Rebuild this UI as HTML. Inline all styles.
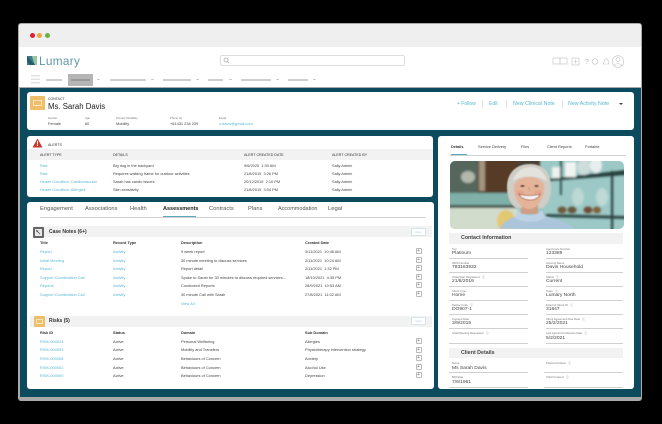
<!DOCTYPE html>
<html><head><meta charset="utf-8"><title>Lumary</title>
<style>
html,body{margin:0;padding:0;background:#000}
body{width:662px;height:424px;position:relative;overflow:hidden;font-family:"Liberation Sans",sans-serif;color:#444;filter:blur(.3px)}
.a{position:absolute}
.t{position:absolute;white-space:nowrap;line-height:6px;height:6px;font-size:3.9px;color:#444}
.l{color:#58b7d2}
.h{font-weight:bold;color:#333}
.lb{font-size:2.8px;color:#777}
.v{font-size:4.9px;color:#444}
.b{position:absolute;width:6px;height:6px;border:.5px solid #bbb;box-sizing:border-box;border-radius:1px;background:#fff;color:#777;font-size:5px;line-height:5px;text-align:center}
.d{position:absolute;height:2px;background:#cfcfcf}
.c{position:absolute;width:3px;height:1px;background:#ccc}
.card{position:absolute;background:#fff;border-radius:3px}
.band{position:absolute;background:#f2f2f2}
.ln{position:absolute;height:.6px;background:#d0d0d0}
.tab{position:absolute;white-space:nowrap;line-height:8px;font-size:5.800px;color:#555}
.nb{position:absolute;width:15px;height:8px;border:.6px solid #d5e5ea;box-sizing:border-box;background:#fff;border-radius:1px;color:#a9cfdb;font-size:3px;line-height:7px;text-align:center}
</style></head><body>
<div class="a" style="left:18px;top:23px;width:624px;height:378px;background:#a9a9a9;border-radius:3px"></div>
<div class="a" style="left:19px;top:24px;width:622px;height:23px;background:#efefef;border-radius:2px 2px 0 0"></div>
<div class="a" style="left:19px;top:47px;width:622px;height:40px;background:#fff"></div>
<div class="a" style="left:29.5px;top:33px;width:5px;height:5px;border-radius:50%;background:#e0202f"></div>
<div class="a" style="left:37px;top:33px;width:5px;height:5px;border-radius:50%;background:#f2a33c"></div>
<div class="a" style="left:45px;top:33px;width:5px;height:5px;border-radius:50%;background:#6db33f"></div>

<svg class="a" style="left:27px;top:56px" width="10" height="9" viewBox="0 0 10 9"><path d="M0 0L5 0 8 9 0 9Z" fill="#3f7d8c"/><path d="M5 0L10 0 10 9 8 9Z" fill="#9cc5a0"/><path d="M0 0L8 9 3 9 0 5Z" fill="#245a6b"/></svg>
<div class="t" style="left:39px;top:54px;height:14px;line-height:14px;font-size:11.800px;letter-spacing:.3px;color:#5f98a6">Lumary</div>

<div class="a" style="left:220px;top:55px;width:185px;height:11px;border:.7px solid #ddd;box-sizing:border-box;border-radius:2px;background:#fff"></div>
<svg class="a" style="left:223px;top:57px" width="7" height="7" viewBox="0 0 7 7"><circle cx="3" cy="3" r="2" fill="none" stroke="#aaa" stroke-width=".8"/><path d="M4.5 4.5L6 6" stroke="#aaa" stroke-width=".8"/></svg>

<svg class="a" style="left:552px;top:54px" width="72" height="14" viewBox="0 0 72 14">
<g fill="none" stroke="#c2c2c2" stroke-width=".6"><rect x="1" y="4" width="7" height="6"/><rect x="8" y="4" width="7" height="6"/><rect x="20" y="4" width="7" height="7"/><path d="M23.5 5.5v4M21.5 7.5h4"/><circle cx="43" cy="7.5" r="2.8"/><path d="M51 10c1-1 1-4 2.5-5s3 1 3.500 5z"/><circle cx="66" cy="7.500" r="5.800"/><circle cx="66" cy="5.500" r="2"/><path d="M62 12c1-3 7-3 8 0"/></g>
<text x="33" y="10" font-size="7" fill="#bbb" font-family="Liberation Sans">?</text></svg>

<div class="a" style="left:31px;top:75px;width:9px;height:9px;background:repeating-linear-gradient(180deg,#e2e2e2 0 1.500px,transparent 1.500px 3.500px)"></div>
<div class="d" style="left:46px;top:79px;width:16px"></div>
<div class="a" style="left:68px;top:74px;width:24.500px;height:12px;background:#b5b5b5"></div>
<div class="a" style="left:71px;top:79px;width:19px;height:2px;background:#999"></div>
<div class="c" style="left:97px;top:79px"></div>
<div class="d" style="left:110px;top:79px;width:36px"></div><div class="c" style="left:151px;top:79px"></div>
<div class="d" style="left:163px;top:79px;width:28px"></div><div class="c" style="left:196px;top:79px"></div>
<div class="d" style="left:208px;top:79px;width:15px"></div><div class="c" style="left:229px;top:79px"></div>
<div class="d" style="left:241px;top:79px;width:30px"></div><div class="c" style="left:276px;top:79px"></div>
<div class="d" style="left:288px;top:79px;width:20px"></div><div class="c" style="left:313px;top:79px"></div>

<div class="a" style="left:20px;top:88px;width:621px;height:309px;background:#0c4b5d"></div>

<!-- contact -->
<div class="card" style="left:27px;top:92px;width:607px;height:38px"></div>
<div class="a" style="left:30px;top:96px;width:15px;height:14px;background:#f0bd68;border-radius:1px"></div>
<div class="a" style="left:33px;top:100px;width:9px;height:6px;border:.6px solid #fbe6bd;box-sizing:border-box"></div>
<div class="t" style="left:48px;top:96px;font-size:3.500px;color:#333">CONTACT</div>
<div class="t" style="left:48px;top:102px;height:10px;line-height:10px;font-size:7.800px;color:#1c1c1c">Ms. Sarah Davis</div>
<div class="t lb" style="left:48px;top:115px">Gender</div><div class="t" style="left:48px;top:121px">Female</div>
<div class="t lb" style="left:85px;top:115px">Age</div><div class="t" style="left:85px;top:121px">60</div>
<div class="t lb" style="left:116px;top:115px">Primary Disability</div><div class="t" style="left:116px;top:121px">Mobility</div>
<div class="t lb" style="left:170px;top:115px">Phone (2)</div><div class="t" style="left:170px;top:121px">+61431 234 239</div>
<div class="t lb" style="left:219px;top:115px">Email</div><div class="t l" style="left:219px;top:121px">s.davis@gmail.com</div>
<div class="t l" style="left:457px;top:101px;font-size:5px">+ Follow</div>
<div class="t l" style="left:489px;top:101px;font-size:5px">Edit</div>
<div class="t l" style="left:513px;top:101px;font-size:5.300px">New Clinical Note</div>
<div class="t l" style="left:568px;top:101px;font-size:5.300px">New Activity Note</div>
<div class="a" style="left:482px;top:100px;width:.6px;height:8px;background:#e4e4e4"></div>
<div class="a" style="left:506px;top:100px;width:.6px;height:8px;background:#e4e4e4"></div>
<div class="a" style="left:562px;top:100px;width:.6px;height:8px;background:#e4e4e4"></div>
<div class="a" style="left:618.500px;top:103px;width:0;height:0;border:2px solid transparent;border-top:2.500px solid #444;border-bottom:0"></div>

<!-- alerts -->
<div class="card" style="left:27px;top:136px;width:406px;height:61px"></div>
<svg class="a" style="left:32px;top:138px" width="11" height="10" viewBox="0 0 11 10"><path d="M5.500 .5L10.500 9.500H.5Z" fill="#c4392f"/><rect x="5" y="3" width="1" height="3.500" fill="#fff"/><rect x="5" y="7" width="1" height="1" fill="#fff"/></svg>
<div class="t" style="left:48px;top:142px;font-size:3.600px;color:#333">ALERTS</div>
<div class="band" style="left:27px;top:149px;width:406px;height:11px"></div>
<div class="t" style="left:40px;top:152px;font-size:3.600px;color:#333">ALERT TYPE</div>
<div class="t" style="left:113px;top:152px;font-size:3.600px;color:#333">DETAILS</div>
<div class="t" style="left:244px;top:152px;font-size:3.600px;color:#333">ALERT CREATED DATE</div>
<div class="t" style="left:332px;top:152px;font-size:3.600px;color:#333">ALERT CREATED BY</div>
<div class="t l" style="left:40px;top:162.500px">Risk</div><div class="t" style="left:113px;top:162.500px">Big dog in the backyard</div><div class="t" style="left:244px;top:162.500px">9/6/2020 &nbsp;1:30 AM</div><div class="t" style="left:332px;top:162.500px">Sally Admin</div>
<div class="t l" style="left:40px;top:170.500px">Risk</div><div class="t" style="left:113px;top:170.500px">Requires walking frame for outdoor activities</div><div class="t" style="left:244px;top:170.500px">21/8/2019 &nbsp;3:26 PM</div><div class="t" style="left:332px;top:170.500px">Sally Admin</div>
<div class="t l" style="left:40px;top:178.500px">Health Condition: Cardiovascular</div><div class="t" style="left:113px;top:178.500px">Sarah has cardio issues</div><div class="t" style="left:244px;top:178.500px">20/12/2019 &nbsp;2:10 PM</div><div class="t" style="left:332px;top:178.500px">Sally Admin</div>
<div class="t l" style="left:40px;top:186.500px">Health Condition: Allergies</div><div class="t" style="left:113px;top:186.500px">Skin sensitivity</div><div class="t" style="left:244px;top:186.500px">21/8/2019 &nbsp;3:04 PM</div><div class="t" style="left:332px;top:186.500px">Sally Admin</div>

<!-- main -->
<div class="card" style="left:27px;top:202px;width:407px;height:187px"></div>
<div class="tab" style="left:40px;top:205px">Engagement</div>
<div class="tab" style="left:85px;top:205px">Associations</div>
<div class="tab" style="left:130px;top:205px">Health</div>
<div class="tab" style="left:163px;top:205px;color:#222;font-weight:bold;font-size:5.500px">Assessments</div>
<div class="tab" style="left:209px;top:205px">Contracts</div>
<div class="tab" style="left:248px;top:205px">Plans</div>
<div class="tab" style="left:278px;top:205px;font-size:5.500px">Accommodation</div>
<div class="tab" style="left:328px;top:205px">Legal</div>
<div class="ln" style="left:40px;top:216.500px;width:386px"></div>
<div class="a" style="left:163px;top:215.500px;width:33px;height:1.200px;background:#5aa9bd"></div>

<div class="band" style="left:33px;top:226px;width:399px;height:11px"></div>
<div class="a" style="left:33px;top:227px;width:10.500px;height:10.500px;background:#666;border-radius:1px"></div>
<div class="a" style="left:34.500px;top:228.500px;width:7.500px;height:7.500px;background:#e9e9e9"></div>
<svg class="a" style="left:35px;top:229px" width="6" height="6" viewBox="0 0 6 6"><path d="M1 1L5 5M3 1.500L1.500 3" stroke="#555" stroke-width=".8" fill="none"/></svg>
<div class="t" style="left:49px;top:228.500px;font-size:5px;color:#333;font-weight:bold">Case Notes (6+)</div>
<div class="nb" style="left:411px;top:228px">New</div>

<div class="t h" style="left:40px;top:240px">Title</div><div class="t h" style="left:113px;top:240px">Record Type</div><div class="t h" style="left:181px;top:240px">Description</div><div class="t h" style="left:305px;top:240px">Created Date</div>

<div class="t l" style="left:40px;top:249px">Report</div><div class="t l" style="left:113px;top:249px">Activity</div><div class="t" style="left:181px;top:249px">9 week report</div><div class="t" style="left:305px;top:249px">3/11/2021 &nbsp;10:48 AM</div><div class="b" style="left:415.500px;top:248px">+</div>
<div class="t l" style="left:40px;top:257.500px">Initial Meeting</div><div class="t l" style="left:113px;top:257.500px">Activity</div><div class="t" style="left:181px;top:257.500px">30 minute meeting to discuss services</div><div class="t" style="left:305px;top:257.500px">2/11/2021 &nbsp;10:24 AM</div><div class="b" style="left:415.500px;top:256.500px">+</div>
<div class="t l" style="left:40px;top:266px">Report</div><div class="t l" style="left:113px;top:266px">Activity</div><div class="t" style="left:181px;top:266px">Report detail</div><div class="t" style="left:305px;top:266px">2/11/2021 &nbsp;1:32 PM</div><div class="b" style="left:415.500px;top:265px">+</div>
<div class="t l" style="left:40px;top:274.500px">Support Coordination Call</div><div class="t l" style="left:113px;top:274.500px">Activity</div><div class="t" style="left:181px;top:274.500px">Spoke to Sarah for 30 minutes to discuss required services...</div><div class="t" style="left:305px;top:274.500px">18/10/2021 &nbsp;4:35 PM</div><div class="b" style="left:415.500px;top:273.500px">+</div>
<div class="t l" style="left:40px;top:283px">Reports</div><div class="t l" style="left:113px;top:283px">Activity</div><div class="t" style="left:181px;top:283px">Conducted Reports</div><div class="t" style="left:305px;top:283px">28/9/2021 &nbsp;10:53 AM</div><div class="b" style="left:415.500px;top:282px">+</div>
<div class="t l" style="left:40px;top:292px">Support Coordination Call</div><div class="t l" style="left:113px;top:292px">Activity</div><div class="t" style="left:181px;top:292px">30 minute Call with Sarah</div><div class="t" style="left:305px;top:292px">27/8/2021 &nbsp;11:02 AM</div><div class="b" style="left:415.500px;top:291px">+</div>
<div class="t l" style="left:181px;top:300.500px">View All</div>

<div class="band" style="left:30px;top:316px;width:402px;height:10.500px"></div>
<div class="a" style="left:34px;top:316px;width:11px;height:11px;background:#efbe6a;border-radius:1px"></div>
<div class="a" style="left:36px;top:319px;width:7px;height:5px;border:.5px solid #fae3b8;box-sizing:border-box"></div>
<div class="t" style="left:49px;top:318px;font-size:5px;color:#333;font-weight:bold">Risks (5)</div>
<div class="nb" style="left:411px;top:317px">New</div>

<div class="t h" style="left:40px;top:330px">Risk ID</div><div class="t h" style="left:113px;top:330px">Status</div><div class="t h" style="left:181px;top:330px">Domain</div><div class="t h" style="left:305px;top:330px">Sub Domain</div>

<div class="t l" style="left:40px;top:338.500px">RISK-000024</div><div class="t" style="left:113px;top:338.500px">Active</div><div class="t" style="left:181px;top:338.500px">Personal Wellbeing</div><div class="t" style="left:305px;top:338.500px">Allergies</div><div class="b" style="left:415.500px;top:338px">+</div>
<div class="t l" style="left:40px;top:347px">RISK-000003</div><div class="t" style="left:113px;top:347px">Active</div><div class="t" style="left:181px;top:347px">Mobility and Transfers</div><div class="t" style="left:305px;top:347px">Physiotherapy intervention strategy</div><div class="b" style="left:415.500px;top:346.500px">+</div>
<div class="t l" style="left:40px;top:355.500px">RISK-000008</div><div class="t" style="left:113px;top:355.500px">Active</div><div class="t" style="left:181px;top:355.500px">Behaviours of Concern</div><div class="t" style="left:305px;top:355.500px">Anxiety</div><div class="b" style="left:415.500px;top:355px">+</div>
<div class="t l" style="left:40px;top:364.500px">RISK-000002</div><div class="t" style="left:113px;top:364.500px">Active</div><div class="t" style="left:181px;top:364.500px">Behaviours of Concern</div><div class="t" style="left:305px;top:364.500px">Alcohol Use</div><div class="b" style="left:415.500px;top:363.500px">+</div>
<div class="t l" style="left:40px;top:373px">RISK-000000</div><div class="t" style="left:113px;top:373px">Active</div><div class="t" style="left:181px;top:373px">Behaviours of Concern</div><div class="t" style="left:305px;top:373px">Depression</div><div class="b" style="left:415.500px;top:372px">+</div>

<!-- right -->
<div class="card" style="left:438px;top:136px;width:196px;height:253px"></div>
<div class="t" style="left:451px;top:144px;font-weight:bold;color:#333;font-size:3.800px">Details</div>
<div class="t" style="left:478px;top:144px">Service Delivery</div>
<div class="t" style="left:521px;top:144px">Files</div>
<div class="t" style="left:547px;top:144px">Client Reports</div>
<div class="t" style="left:585px;top:144px">Portable</div>
<div class="ln" style="left:450px;top:154.500px;width:176px;height:1px"></div>
<div class="a" style="left:451px;top:154px;width:16px;height:1.200px;background:#5aa9bd"></div>

<svg class="a" style="left:450px;top:161px;border-radius:5px" width="174" height="68" viewBox="0 0 174 68">
<defs><filter id="f"><feGaussianBlur stdDeviation="1.100"/></filter><filter id="g"><feGaussianBlur stdDeviation=".5"/></filter></defs>
<rect width="174" height="68" fill="#9cc8c6"/>
<g filter="url(#f)">
<rect x="-2" y="-2" width="32" height="36" fill="#55665c"/>
<rect x="28" y="-2" width="42" height="34" fill="#573a28"/>
<rect x="29" y="-2" width="6" height="32" fill="#a39480"/>
<rect x="68" y="-2" width="22" height="12" fill="#4a3f35"/>
<rect x="-2" y="32" width="70" height="14" fill="#7fb1a8"/>
<rect x="-2" y="44" width="70" height="3" fill="#3e4e45"/>
<rect x="-2" y="47" width="70" height="23" fill="#d2dccd"/>
<ellipse cx="56" cy="60" rx="9" ry="11" fill="#e2c870"/>
<ellipse cx="18" cy="16" rx="7" ry="6" fill="#b2b8ab"/>
<path d="M98 18L176 9v5l-78 6z" fill="#263f3e"/>
<path d="M96 53L176 55v3L96 56z" fill="#2e4846"/>
<rect x="102" y="6" width="9" height="11" fill="#eef2ef"/>
<rect x="115" y="1" width="11" height="15" fill="#f2f4f2"/>
<ellipse cx="134" cy="6" rx="7" ry="8" fill="#cfdcdc"/>
<ellipse cx="146" cy="4" rx="6" ry="8" fill="#e8eeee"/>
<rect x="110" y="-2" width="1.800" height="36" fill="#2c4644"/>
<rect x="161" y="10" width="2.200" height="60" fill="#263f3e"/>
<ellipse cx="112" cy="49" rx="4.500" ry="3.500" fill="#6e5a3a"/>
<ellipse cx="122" cy="49" rx="4.500" ry="3.500" fill="#66563e"/>
<ellipse cx="138" cy="49" rx="4.500" ry="3.500" fill="#6f4c36"/>
<ellipse cx="147" cy="49" rx="4" ry="3.500" fill="#7e633c"/>
<ellipse cx="128" cy="36" rx="6" ry="9" fill="#bcd8d4"/>
<ellipse cx="152" cy="36" rx="6" ry="9" fill="#bfdad6"/>
</g>
<g filter="url(#g)">
<path d="M50 68c3-9 14-12 20-14h20c8 2 28 6 35 14z" fill="#abc5da"/>
<path d="M68 49c6 7 18 7 24 0l3 8c-8 5-22 5-30 0z" fill="#bdd2e4"/>
<rect x="71" y="40" width="17" height="13" fill="#cf9d86"/>
<path d="M80 3c-14 0-23 9-23 23 0 10 4 18 9 21h6V20h16v27h5c5-4 9-12 8-23C100 11 93 3 80 3z" fill="#cfcdc6"/>
<path d="M63 20c2-9 10-14 18-14 7 0 14 5 16 14-9-6-25-6-34 0z" fill="#e4e2dc"/>
<path d="M64 24c3-6 9-8 15-8s12 2 15 8c1 12-6 24-15 24S63 36 64 24z" fill="#e4b499"/>
<ellipse cx="70" cy="32" rx="4" ry="3" fill="#e69f88" opacity=".7"/>
<ellipse cx="88" cy="32" rx="4" ry="3" fill="#e69f88" opacity=".7"/>
<path d="M69 33c4 2 16 2 21 0-2 8-18 8-21 0z" fill="#f7f4f0" stroke="#a8584e" stroke-width=".8"/>
<ellipse cx="72.500" cy="25" rx="2.200" ry="1" fill="#5a3d30"/>
<ellipse cx="86.500" cy="25" rx="2.200" ry="1" fill="#5a3d30"/>
<path d="M79 26v4" stroke="#c58e75" stroke-width=".8"/>
</g></svg>

<div class="band" style="left:449px;top:233px;width:173.500px;height:10.500px"></div>
<div class="t" style="left:461px;top:235px;font-size:5.300px;color:#444;font-weight:bold">Contact Information</div>

<div class="t lb" style="left:452px;top:246px">Tier</div><div class="t v" style="left:452px;top:251px">Platinum</div><div class="ln" style="left:449px;top:257.500px;width:79px"></div>
<div class="t lb" style="left:546px;top:246px">Aged Care Number</div><div class="t v" style="left:546px;top:251px">123389</div><div class="ln" style="left:546px;top:257.500px;width:77px"></div>
<div class="t lb" style="left:452px;top:260px">NDIS Number</div><div class="t v" style="left:452px;top:265px">783163932</div><div class="ln" style="left:449px;top:272px;width:79px"></div>
<div class="t lb" style="left:546px;top:260px">Account Name</div><div class="t v" style="left:546px;top:265px">Davis Household</div><div class="ln" style="left:546px;top:272px;width:77px"></div>
<div class="t lb" style="left:452px;top:274px">Initial Start Registered &nbsp; ⓘ</div><div class="t v" style="left:452px;top:279px">21/8/2019</div><div class="ln" style="left:449px;top:286px;width:79px"></div>
<div class="t lb" style="left:546px;top:274px">Status &nbsp; ⓘ</div><div class="t v" style="left:546px;top:279px">Current</div><div class="ln" style="left:546px;top:286px;width:77px"></div>
<div class="t lb" style="left:452px;top:288px">Client Type</div><div class="t v" style="left:452px;top:293px">Home</div><div class="ln" style="left:449px;top:300px;width:79px"></div>
<div class="t lb" style="left:546px;top:288px">Team &nbsp; ⓘ</div><div class="t v" style="left:546px;top:293px">Lumary North</div><div class="ln" style="left:546px;top:300px;width:77px"></div>
<div class="t lb" style="left:452px;top:302px">Debtor Code &nbsp; ⓘ</div><div class="t v" style="left:452px;top:307px">DO907-1</div><div class="ln" style="left:449px;top:314px;width:79px"></div>
<div class="t lb" style="left:546px;top:302px">External Client ID &nbsp; ⓘ</div><div class="t v" style="left:546px;top:307px">31847</div><div class="ln" style="left:546px;top:314px;width:77px"></div>
<div class="t lb" style="left:452px;top:316px">Consent Date</div><div class="t v" style="left:452px;top:321px">3/9/2015</div><div class="ln" style="left:449px;top:328px;width:79px"></div>
<div class="t lb" style="left:546px;top:316px">Client Agreement Due Date &nbsp; ⓘ</div><div class="t v" style="left:546px;top:321px">25/2/2021</div><div class="ln" style="left:546px;top:328px;width:77px"></div>
<div class="t lb" style="left:452px;top:330px">Initial Meeting Requested &nbsp; ⓘ</div><div class="ln" style="left:449px;top:342.500px;width:79px"></div>
<div class="t lb" style="left:546px;top:330px">Last Agreement Review Date &nbsp; ⓘ</div><div class="t v" style="left:546px;top:336px">5/2/2021</div><div class="ln" style="left:546px;top:342.500px;width:77px"></div>

<div class="band" style="left:449px;top:347.500px;width:173.500px;height:10.500px"></div>
<div class="t" style="left:461px;top:350px;font-size:5.300px;color:#444;font-weight:bold">Client Details</div>
<div class="t lb" style="left:452px;top:360px">Name</div><div class="t v" style="left:452px;top:366px">Ms Sarah Davis</div><div class="ln" style="left:449px;top:372px;width:79px"></div>
<div class="t lb" style="left:546px;top:360px">Preferred Name &nbsp; ⓘ</div><div class="ln" style="left:544px;top:372px;width:79px"></div>
<div class="t lb" style="left:452px;top:374px">Birthdate</div><div class="t v" style="left:452px;top:380px">7/6/1961</div><div class="ln" style="left:449px;top:386.500px;width:79px"></div>
<div class="t lb" style="left:546px;top:374px">Child Involved &nbsp; ⓘ</div><div class="ln" style="left:544px;top:386.500px;width:79px"></div>
</body></html>
